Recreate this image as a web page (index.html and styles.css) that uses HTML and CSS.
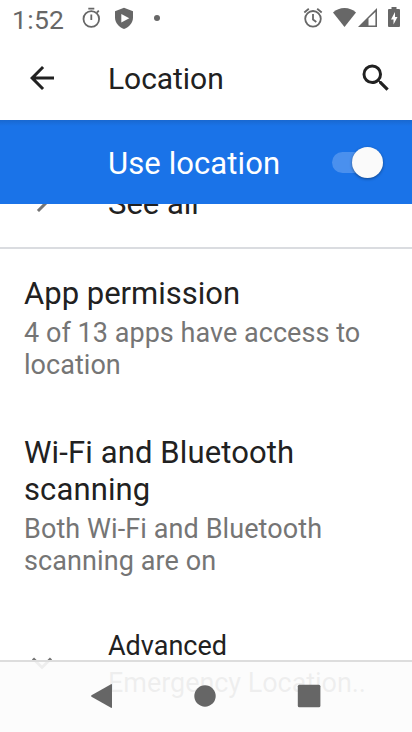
FILE: index.html
```html
<!DOCTYPE html>
<html lang="en">
<head>
<meta charset="utf-8">
<title>Location</title>
<link rel="stylesheet" href="styles.css">
</head>
<body>
<div class="screen">
  <header class="status">
    <span class="clock">1:52</span>
    <svg class="status-left" width="90" height="36" viewBox="72 0 90 36">
      <g fill="none" stroke="#676767" stroke-width="1.800"><circle cx="91.300" cy="19" r="7.800"/><path d="M88.300 8.700h6M91.300 14.500v5.500M97 12.500l1.800-1.800"/></g>
      <path fill="#676767" d="M124 7.700l9 3.500v6.300c0 5.500-4 9.500-9 11.500-5-2-9-6-9-11.500v-6.300z"/><path fill="#fff" d="M121.300 14l8 4.300-8 4.300z"/>
      <circle cx="157" cy="18" r="3" fill="#676767"/>
    </svg>
    <svg class="status-right" width="108" height="36" viewBox="302 0 108 36">
      <g fill="none" stroke="#676767" stroke-width="1.800"><circle cx="313" cy="18.800" r="7.800"/><path d="M313 14v5.500l3.300 2.500M304.300 12.500l4.500-3.700M321.700 12.500L317.200 8.800"/></g>
      <path fill="#676767" d="M333 12.500c6-6 17-6 23 0L344.500 27z"/>
      <path fill="#676767" fill-rule="evenodd" d="M358 27L377 8v19zM368.500 18.500v6.900h6.900V12z"/>
      <path fill="#676767" d="M391.500 7h5v2h2.500q1 0 1 1v16q0 1-1 1h-10q-1 0-1-1V10q0-1 1-1h2.500z"/><path fill="#fff" d="M395 12l-4 7.500h2.500v5l4-7.500H395z"/>
    </svg>
  </header>
  <div class="toolbar">
    <svg class="back" width="36" height="36" viewBox="0 0 24 24"><path d="M20 11H7.830l5.590-5.590L12 4l-8 8 8 8 1.410-1.410L7.830 13H20v-2z"/></svg>
    <h1>Location</h1>
    <svg class="search" width="36" height="36" viewBox="0 0 24 24"><path d="M15.500 14h-.79l-.28-.27A6.471 6.471 0 0 0 16 9.500 6.500 6.500 0 1 0 9.500 16c1.610 0 3.090-.59 4.230-1.570l.27.28v.79l5 4.990L20.490 19l-4.990-5zm-6 0C7.010 14 5 11.990 5 9.500S7.010 5 9.500 5 14 7.010 14 9.500 11.990 14 9.500 14z"/></svg>
  </div>
  <div class="switch-bar"><span>Use location</span><div class="switch"><i></i></div></div>
  <main>
    <div class="see-all"><svg width="36" height="36" viewBox="0 0 24 24"><path d="M9.300 6l6 6-6 6" fill="none" stroke="#757575" stroke-width="2"/></svg><span>See all</span></div>
    <section class="pref permission"><h2>App permission</h2><p>4 of 13 apps have access to<br>location</p></section>
    <section class="pref scanning"><h2>Wi-Fi and Bluetooth<br>scanning</h2><p>Both Wi-Fi and Bluetooth<br>scanning are on</p></section>
    <section class="advanced"><svg width="36" height="36" viewBox="0 0 24 24"><path d="M6 9l6 6 6-6" fill="none" stroke="#757575" stroke-width="2"/></svg><div><h3>Advanced</h3><p>Emergency Location..</p></div></section>
  </main>
  <nav>
    <svg width="412" height="70" viewBox="0 662 412 70" fill="#666"><path d="M91.500 695.300L111 684.200q1-.5 1 .6v22.400q0 1.100-1 .6L91.500 696.700q-1-.7 0-1.400z"/><circle cx="205" cy="696" r="10.700"/><rect x="297.800" y="684.800" width="22.600" height="22.400" rx="1.500"/></svg>
  </nav>
</div>
</body>
</html>
```
FILE: styles.css
```css
* { box-sizing: border-box; margin: 0; padding: 0; }
body { width: 412px; height: 732px; overflow: hidden; background: #fff; font-family: Roboto, sans-serif; color: #212121; }
svg { display: block; flex: none; }
h1, h2, h3 { font-weight: 400; }
.screen { position: relative; height: 732px; overflow: hidden; display: flex; flex-direction: column; }
.status { height: 36px; flex: none; display: flex; align-items: center; padding: 0 2px 0 12px; color: #676767; }
.clock { width: 60px; font-size: 26.500px; line-height: 36px; padding-top: 3px; letter-spacing: .3px; }
.status-right { margin-left: auto; }
.toolbar { height: 84px; flex: none; display: flex; align-items: center; padding: 0 18px 0 24px; fill: #212121; }
.toolbar h1 { margin-left: 48px; font-size: 30px; letter-spacing: -.05px; flex: 1; }
.switch-bar { height: 84px; flex: none; background: linear-gradient(#1968d0, #1a73e8 6px); color: #fff; display: flex; align-items: center; padding: 0 29px 0 108px; font-size: 31px; letter-spacing: .1px; justify-content: space-between; }
.switch-bar span { padding-top: 2px; }
.switch { width: 51px; height: 32px; display: flex; align-items: center; justify-content: flex-end; position: relative; }
.switch::before { content: ""; position: absolute; left: 0; top: 5.500px; width: 40px; height: 21px; border-radius: 11px; background: #4a90ee; }
.switch i { position: relative; width: 31px; height: 31px; border-radius: 50%; background: #fafafa; box-shadow: 0 1px 3px rgba(0,0,0,.4); }
main { flex: 1; overflow: hidden; }
.see-all { height: 45px; border-bottom: 2px solid #dadce0; padding-left: 24px; display: flex; overflow: hidden; }
.see-all svg { margin-top: -20px; }
.see-all span { margin: -18px 0 0 48px; font-size: 31px; line-height: 36px; }
.pref { padding-left: 24px; }
.pref h2 { font-size: 31px; line-height: 37px; }
.scanning h2 { letter-spacing: .12px; }
.pref p { margin-top: 5px; font-size: 27px; line-height: 32px; letter-spacing: .04px; color: #757575; }
.scanning p { letter-spacing: .09px; }
.permission { padding-top: 26px; height: 159px; }
.scanning { padding-top: 26px; height: 204px; }
.advanced { display: flex; padding: 16px 0 0 24px; }
.advanced svg { margin-top: 17px; }
.advanced div { margin-left: 48px; }
.advanced h3, .advanced p { font-size: 27px; line-height: 36px; white-space: nowrap; }
.advanced p { color: #757575; padding-top: 1px; letter-spacing: -.05px; }
nav { position: absolute; left: 0; right: 0; bottom: 0; height: 72px; border-top: 2px solid #ddd; background: rgba(252,252,252,.9); }
```
